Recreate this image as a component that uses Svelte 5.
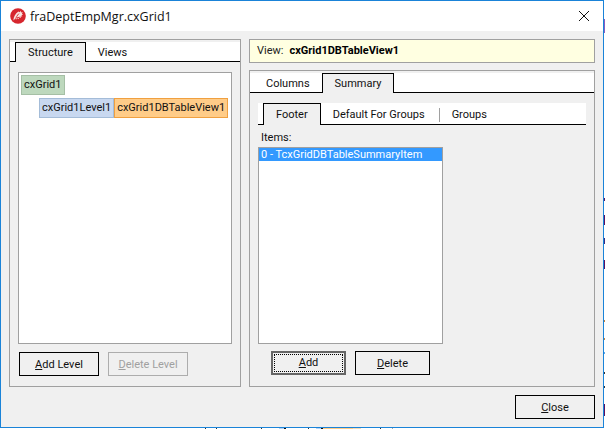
<script>
  const rootTabs = ['Structure', 'Views'];
  const viewTabs = ['Columns', 'Summary'];
  const summaryTabs = ['Footer', 'Default For Groups', 'Groups'];

  // bits of the window behind the dialog, showing past its edge: [x, y, w, h, colour]
  const behind = [
    [604, 19, 1, 14, '#8a5cc0'],
    [604, 198, 1, 3, '#5a1060'],
    [604, 215, 1, 10, '#5a1060'],
    [604, 238, 1, 6, '#3a2a80'],
    [604, 260, 1, 9, '#5a1060'],
    [604, 320, 1, 2, '#c08040'],
    [604, 338, 1, 2, '#c08040'],
    [604, 352, 1, 2, '#59a5e8'],
    [604, 372, 1, 2, '#333'],
    [604, 386, 1, 2, '#333'],
    [604, 404, 1, 12, '#5a1060'],
    [205, 428, 1, 1, '#333'],
    [216, 428, 1, 1, '#333'],
    [261, 428, 1, 1, '#333'],
    [279, 428, 5, 1, '#b5d3f5'],
    [284, 428, 2, 1, '#111'],
    [308, 428, 1, 1, '#333'],
    [316, 428, 5, 1, '#b5d3f5'],
    [321, 428, 2, 1, '#111'],
    [323, 428, 30, 1, '#ffcc88'],
    [353, 428, 8, 1, '#f5dcb8'],
    [380, 428, 1, 1, '#333'],
    [392, 428, 1, 1, '#aaa'],
  ];
</script>

<div class="window">
  <header class="titlebar">
    <svg class="logo" viewBox="0 0 16 16" width="16" height="16" aria-hidden="true">
      <circle cx="8" cy="8" r="7.8" fill="#d6262e" />
      <path d="M3.4 12.6c.2-3.6 1.8-7 5-9l1.2.6 1-1.4.5 1.7 1.6-.5-.8 1.800 1.300.5-1.800 1 1 1-2.100.4.600 1.300-2-.2-.2 1.500-1.500-1-1.400 1.600-.9-.9z" fill="#f8e4e0" />
      <path d="M5.400 12c.5-2.400 1.700-4.600 3.500-6.400M7 9.800l2.800-.6" stroke="#d6262e" stroke-width=".9" fill="none" />
    </svg>
    <span class="title">fraDeptEmpMgr.cxGrid1</span>
    <svg class="close-x" viewBox="0 0 10 10" width="10" height="10" aria-hidden="true">
      <path d="M0 0l10 10M10 0L0 10" stroke="#111" stroke-width="1" fill="none" />
    </svg>
  </header>

  <div class="client">
    <div class="columns">
      <section class="panel left">
        <div class="tabs root-tabs">
          {#each rootTabs as tab, i}
            <span class="tab" class:active={i === 0}>{tab}</span>
          {/each}
        </div>
        <div class="tree">
          <span class="node grid">cxGrid1</span>
          <div class="tree-row">
            <span class="node level">cxGrid1Level1</span>
            <span class="node view">cxGrid1DBTableView1</span>
          </div>
        </div>
        <div class="buttons left-buttons">
          <button class="btn"><u>A</u>dd Level</button>
          <button class="btn disabled"><u>D</u>elete Level</button>
        </div>
      </section>

      <div class="right">
        <div class="view-bar">View:<b>cxGrid1DBTableView1</b></div>
        <section class="panel summary">
          <div class="tabs view-tabs">
            {#each viewTabs as tab, i}
              <span class="tab" class:active={i === 1}>{tab}</span>
            {/each}
          </div>
          <div class="tabs sub-tabs">
            {#each summaryTabs as tab, i}
              <span class="tab" class:active={i === 0} class:sep={i === 1}>{tab}</span>
            {/each}
          </div>
          <div class="items-label">Items:</div>
          <div class="listbox">
            <div class="item selected">0 - TcxGridDBTableSummaryItem</div>
          </div>
          <div class="buttons right-buttons">
            <button class="btn focused"><span class="focus-ring"><u>A</u>dd</span></button>
            <button class="btn small"><u>D</u>elete</button>
          </div>
        </section>
      </div>
    </div>
    <div class="footer">
      <button class="btn"><u>C</u>lose</button>
    </div>
  </div>
</div>

{#each behind as [x, y, w, h, colour]}
  <i class="behind" style="left:{x}px;top:{y}px;width:{w}px;height:{h}px;background:{colour}"></i>
{/each}

<style>
  :global(body) {
    background: #fff;
    overflow: hidden;
  }

  .window {
    box-sizing: border-box;
    width: 604px;
    height: 428px;
    border: 1px solid #1a83d8;
    display: flex;
    flex-direction: column;
    font-family: Roboto, sans-serif;
    font-size: 11px;
    color: #111;
    overflow: hidden;
  }

  .behind {
    position: absolute;
  }

  .titlebar {
    height: 30px;
    flex: none;
    display: flex;
    align-items: center;
    background: #fff;
    padding: 0 14px 0 9px;
  }

  .logo {
    flex: none;
  }

  .title {
    margin-left: 4px;
    font-family: "Open Sans", sans-serif;
    font-size: 12.5px;
    flex: 1;
  }

  .client {
    flex: 1;
    background: #f0f0f0;
    padding: 8px 8px 0;
    display: flex;
    flex-direction: column;
  }

  .columns {
    display: flex;
    gap: 8px;
    height: 348px;
  }

  .panel {
    box-sizing: border-box;
    border: 1px solid #a0a0a0;
    display: flex;
    flex-direction: column;
  }

  .left {
    width: 232px;
    padding: 2px 0 0;
  }

  .tabs {
    display: flex;
    border-bottom: 1px solid #000;
    height: 20px;
    box-sizing: border-box;
    background: #fff;
  }

  .tab {
    padding: 0 12px;
    line-height: 21px;
  }

  .tab.active {
    border: 1px solid #000;
    border-bottom: none;
    background: #f0f0f0;
    height: 20px;
    line-height: 19px;
    box-sizing: border-box;
  }

  .root-tabs {
    padding-left: 5px;
  }

  .tree {
    margin: 10px 8px 0;
    height: 272px;
    border: 1px solid #a0a0a0;
    background: #fff;
    padding: 2px;
    box-sizing: border-box;
  }

  .node {
    display: inline-block;
    box-sizing: border-box;
    height: 20px;
    line-height: 18px;
    padding: 0 2px;
    border: 1px solid;
  }

  .grid {
    background: #bdd8bd;
    border-color: #a5bfa5;
  }

  .tree-row {
    display: flex;
    margin: 3px 0 0 18px;
  }

  .level {
    background: #c8d8f0;
    border-color: #a4bcd8;
  }

  .view {
    background: #ffcc88;
    border-color: #f0a040;
  }

  .buttons {
    display: flex;
  }

  .left-buttons {
    margin: 8px 0 0 9px;
    gap: 9px;
  }

  .btn {
    box-sizing: border-box;
    width: 80px;
    height: 24px;
    padding: 0;
    border: 1px solid #000;
    background: #f0f0f0;
    color: #111;
    font: inherit;
  }

  .btn.disabled {
    border-color: #adadad;
    color: #a0a0a0;
  }

  .btn.small {
    width: 75px;
  }

  .btn.focused {
    width: 75px;
    border: 2px solid #666;
    padding: 1px;
  }

  .focus-ring {
    display: block;
    height: 100%;
    line-height: 16px;
    border: 1px dotted #000;
    box-sizing: border-box;
  }

  .right {
    width: 346px;
    display: flex;
    flex-direction: column;
    gap: 7px;
  }

  .view-bar {
    box-sizing: border-box;
    height: 24px;
    line-height: 22px;
    border: 1px solid #a0a0a0;
    background: #ffffe1;
    padding-left: 7px;
    color: #222;
  }

  .view-bar b {
    margin-left: 6px;
    color: #000;
  }

  .summary {
    flex: 1;
    padding-top: 2px;
  }

  .view-tabs .tab:first-child {
    padding-left: 16px;
  }

  .sub-tabs {
    margin: 10px 8px 0 8px;
    padding-left: 5px;
    height: 22px;
  }

  .sub-tabs .tab {
    line-height: 23px;
  }

  .sub-tabs .tab.active {
    height: 22px;
    line-height: 21px;
  }

  .sub-tabs .sep {
    border-right: 1px solid #a0a0a0;
    height: 14px;
    line-height: 14px;
    margin-top: 5px;
    padding-right: 14px;
  }

  .items-label {
    margin: 6px 0 0 11px;
    line-height: 14px;
  }

  .listbox {
    box-sizing: border-box;
    width: 185px;
    height: 197px;
    margin: 2px 0 0 8px;
    border: 1px solid #a0a0a0;
    background: #fff;
  }

  .item {
    height: 13px;
    line-height: 13px;
    padding-left: 2px;
  }

  .selected {
    background: #3399ff;
    color: #fff;
  }

  .right-buttons {
    margin: 7px 0 0 21px;
    gap: 9px;
  }

  .footer {
    display: flex;
    justify-content: flex-end;
    margin-top: 8px;
  }
</style>
